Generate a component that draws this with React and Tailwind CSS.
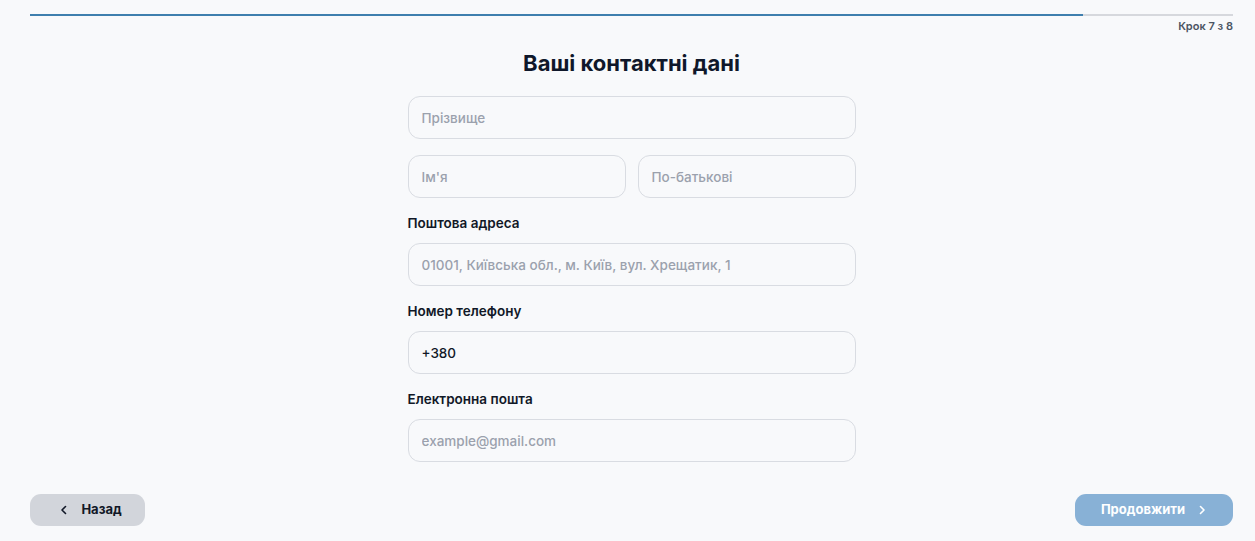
import React from 'react';

const font = { fontFamily: 'Inter, "Noto Sans", sans-serif' };

const Field = ({ placeholder, value }) => (
  <input
    className="w-full h-[43px] rounded-[12px] border border-[#d9dce2] bg-[#f8f9fb] px-[13px] text-[13.5px] font-medium text-[#111827] placeholder:text-[#9ba1ad] outline-none"
    placeholder={placeholder}
    defaultValue={value}
  />
);

const Label = ({ children }) => (
  <div className="text-[13.5px] font-semibold text-[#111827] leading-[20px] mb-[10px]">{children}</div>
);

export default function App() {
  return (
    <div className="min-h-screen bg-[#f8f9fb] pl-[30px] pr-[22px] pt-[14px] flex flex-col" style={font}>
      {/* Progress */}
      <div className="h-[2px] w-full bg-[#d6d8dd]">
        <div className="h-full bg-[#3f7fae]" style={{ width: `${(7 / 8) * 100}%` }} />
      </div>
      <div className="text-right text-[11px] font-semibold text-[#4b5563] leading-[14px] mt-[3px]">Крок 7 з 8</div>

      <h1 className="text-center text-[22px] font-bold text-[#0f172a] leading-[28px] mt-[16px]">Ваші контактні дані</h1>

      <div className="w-[448px] mx-auto mt-[19px] flex flex-col gap-[16px]">
        <Field placeholder="Прізвище" />
        <div className="grid grid-cols-2 gap-[12px]">
          <Field placeholder="Ім'я" />
          <Field placeholder="По-батькові" />
        </div>
        <div className="-mt-[1px]">
          <Label>Поштова адреса</Label>
          <Field placeholder="01001, Київська обл., м. Київ, вул. Хрещатик, 1" />
        </div>
        <div className="-mt-[1px]">
          <Label>Номер телефону</Label>
          <Field value="+380" />
        </div>
        <div className="-mt-[1px]">
          <Label>Електронна пошта</Label>
          <Field placeholder="example@gmail.com" />
        </div>
      </div>

      <div className="flex justify-between items-center mt-[32px]">
        <button className="h-[32px] w-[115px] rounded-[11px] bg-[#d2d5db] flex items-center justify-center gap-[12px] pl-[6px] text-[13px] font-bold text-[#111827]">
          <svg width="10" height="10" viewBox="0 0 10 10" fill="none" stroke="#111827" strokeWidth="1.6" strokeLinecap="round" strokeLinejoin="round">
            <path d="M6.5 1.5L3 5l3.5 3.5" />
          </svg>
          Назад
        </button>
        <button className="h-[32px] w-[158px] rounded-[11px] bg-[#88b1d6] flex items-center justify-center gap-[12px] text-[13px] font-bold text-white">
          Продовжити
          <svg width="10" height="10" viewBox="0 0 10 10" fill="none" stroke="#ffffff" strokeWidth="1.6" strokeLinecap="round" strokeLinejoin="round">
            <path d="M3.5 1.5L7 5 3.5 8.5" />
          </svg>
        </button>
      </div>
    </div>
  );
}
